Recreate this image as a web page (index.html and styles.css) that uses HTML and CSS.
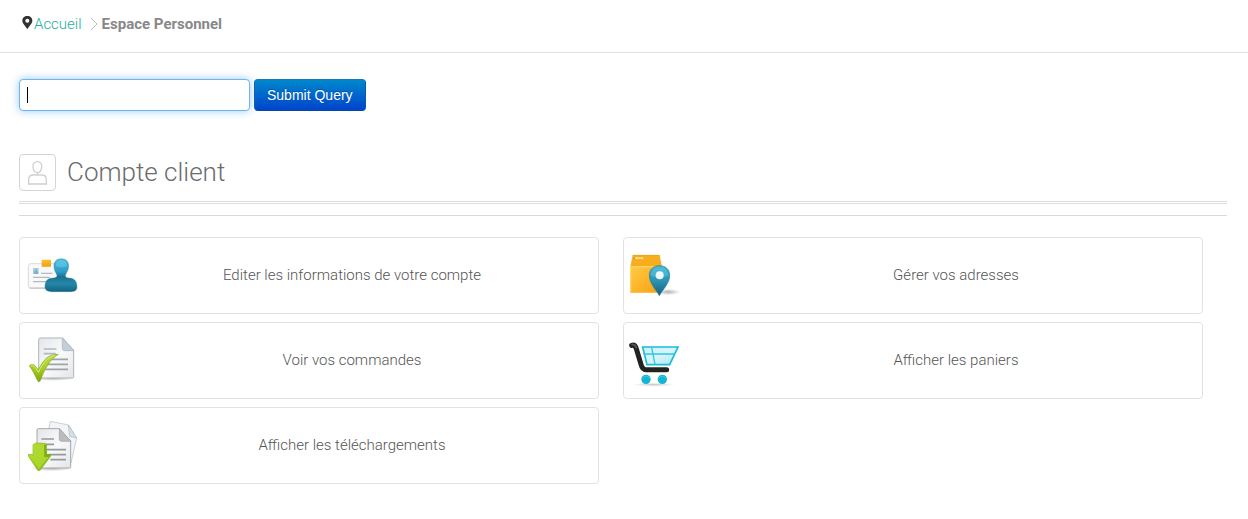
FILE: index.html
```html
<!DOCTYPE html>
<html lang="fr">
  <head>
    <meta charset="UTF-8" />
    <meta name="viewport" content="width=device-width, initial-scale=1.0" />
    <title>Espace Personnel</title>
    <link rel="stylesheet" href="styles.css">
  </head>
  <body>
    <nav class="breadcrumb">
      <svg class="pin" viewBox="0 0 33 45" aria-hidden="true">
        <path fill="#333" fill-rule="evenodd" d="M16 3C7 3 1 9 1 17c0 9 9 15 15 26 6-11 15-17 15-26C31 9 25 3 16 3zm0 8a6 6 0 1 1 0 12 6 6 0 0 1 0-12z" />
      </svg>
      <a href="#">Accueil</a>
      <svg class="chevron" viewBox="0 0 8 14" aria-hidden="true">
        <path d="M1 1l6 6-6 6" fill="none" stroke="#bbb" />
      </svg>
      <span class="current">Espace Personnel</span>
    </nav>

    <main class="content">
      <form class="search">
        <div class="search-field">
          <input class="search-input" type="text" aria-label="Rechercher" autofocus />
        </div>
        <button class="search-btn" type="submit">Submit Query</button>
      </form>

      <header class="title">
        <span class="title-icon">
          <svg viewBox="0 0 57 72" aria-hidden="true">
            <g fill="none" stroke="#d0d0d0" stroke-width="4">
              <path d="M28 2c-9 0-14 7-13 16 1 10 6 17 13 17s12-7 13-17C42 9 37 2 28 2zM28 35v7" />
              <path d="M2 69V56c0-9 5-14 14-14h25c9 0 14 5 14 14v13z" />
            </g>
          </svg>
        </span>
        <h1>Compte client</h1>
      </header>

      <div class="cards">
        <a class="card" href="#">
          <svg class="card-icon" viewBox="27 39 183 183" aria-hidden="true">
            <defs>
              <linearGradient id="user" x1="0" y1="0" x2="0" y2="1">
                <stop offset="0" stop-color="#45b9df" />
                <stop offset=".4" stop-color="#2d9dc4" />
                <stop offset=".55" stop-color="#19718f" />
                <stop offset=".75" stop-color="#2487a9" />
                <stop offset="1" stop-color="#146482" />
              </linearGradient>
              <linearGradient id="orange" x1="0" y1="0" x2="0" y2="1">
                <stop offset="0" stop-color="#fbc132" />
                <stop offset="1" stop-color="#f0a010" />
              </linearGradient>
            </defs>
            <rect x="40" y="95" width="106" height="74" rx="8" fill="#f9f9f9" stroke="#c8c8c8" stroke-width="2" />
            <path d="M44 168h70" stroke="#aaa" stroke-width="2" />
            <rect x="80" y="83" width="28" height="21" rx="1" fill="url(#orange)" />
            <rect x="54" y="108" width="17" height="18" fill="#a5d0e2" />
            <path d="M58 126v-5c0-4 2-5 4-5-3-5 4-7 4-2l-1 3c3 1 4 3 4 5v4z" fill="#79b0c8" />
            <path d="M78 124h34M54 136h50M54 149h42" stroke="#b4b9bc" stroke-width="4" />
            <path d="M139 80c-15 0-23 10-22 24 0 11 6 18 9 26 0 6-4 8-11 8-18 0-25 10-25 27 0 9 8 14 20 14h58c12 0 18-5 18-14 0-17-7-26-24-27-8 0-11-3-11-8 4-9 9-15 10-26 1-14-7-24-22-24z" fill="url(#user)" stroke="#1c7797" />
            <path d="M122 102c0-13 6-18 17-18s17 5 17 18c-9 5-25 5-34 0z" fill="#6ed1ee" opacity=".5" />
          </svg>
          <span class="card-label">Editer les informations de votre compte</span>
        </a>

        <a class="card" href="#">
          <svg class="card-icon" viewBox="26 39 183 183" aria-hidden="true">
            <defs>
              <linearGradient id="box" x1="0" y1="0" x2="1" y2="1">
                <stop offset="0" stop-color="#ffcb45" />
                <stop offset=".5" stop-color="#fdb52a" />
                <stop offset="1" stop-color="#f0a018" />
              </linearGradient>
              <linearGradient id="marker" x1="0" y1="0" x2="0" y2="1">
                <stop offset="0" stop-color="#3db4d3" />
                <stop offset=".5" stop-color="#2c94b4" />
                <stop offset="1" stop-color="#155f80" />
              </linearGradient>
              <radialGradient id="cast">
                <stop offset="0" stop-color="#777" stop-opacity=".6" />
                <stop offset="1" stop-color="#999" stop-opacity="0" />
              </radialGradient>
            </defs>
            <ellipse cx="146" cy="180" rx="38" ry="10" fill="url(#cast)" />
            <path d="M33 104h94v79H33z" fill="url(#box)" />
            <path d="M40 69h81l7 36H33z" fill="#f8ad1d" />
            <path d="M40 70h81" stroke="#e9a01c" stroke-width="2" />
            <path d="M34 104h93" stroke="#ffdc78" stroke-width="3" />
            <path d="M42 76h30v5H42z" fill="#ffdf91" />
            <path d="M42 76h5v5h-5z" fill="#9b9c55" />
            <path d="M34 181h92M35 106v75" stroke="#ffd25f" stroke-width="2" />
            <path d="M121 101c-19 0-31 12-31 29 0 24 18 40 30 61 12-21 31-37 31-61 0-17-12-29-30-29z" fill="url(#marker)" stroke="#207c9a" stroke-width="2" />
            <path d="M94 130c0-15 11-25 26-25s27 10 27 25c-14 9-39 9-53 0z" fill="#71cee2" opacity=".4" />
            <circle cx="121" cy="130" r="12" fill="#eefaff" />
          </svg>
          <span class="card-label">Gérer vos adresses</span>
        </a>

        <a class="card" href="#">
          <svg class="card-icon" viewBox="27 36 183 183" aria-hidden="true">
            <defs>
              <linearGradient id="paper" x1="0" y1="0" x2="1" y2="1">
                <stop offset="0" stop-color="#e3e5e7" />
                <stop offset=".5" stop-color="#fafafa" />
                <stop offset="1" stop-color="#e2e5e8" />
              </linearGradient>
              <linearGradient id="check" x1="0" y1="0" x2="0" y2="1">
                <stop offset="0" stop-color="#bfdb48" />
                <stop offset=".5" stop-color="#a9cf20" />
                <stop offset="1" stop-color="#7ba711" />
              </linearGradient>
            </defs>
            <ellipse cx="115" cy="181" rx="65" ry="8" fill="url(#cast)" />
            <path d="M76 60h67l33 37v79q0 4-4 4H76q-5 0-5-5V65q0-5 5-5z" fill="url(#paper)" stroke="#aeb5bb" stroke-width="3" />
            <path d="M142 60l35 38h-28q-7 0-7-7z" fill="#c4d0d9" stroke="#a4b0b8" stroke-width="2" />
            <path d="M86 93h38M86 107h36" stroke="#b4b8be" stroke-width="5" />
            <path d="M95 124h64M91 139h68M90 154h69" stroke="#a0a4aa" stroke-width="5" />
            <path d="M43 143c6-5 13-4 17 0l10 13c15-31 31-48 60-47-26 16-40 41-54 79-2 5-6 4-8 0-8-17-15-31-25-45z" fill="url(#check)" stroke="#80a61b" stroke-width="2" />
            <path d="M48 143c7-3 11 1 22 20 14-30 28-46 48-51" fill="none" stroke="#dced83" stroke-width="3" />
          </svg>
          <span class="card-label">Voir vos commandes</span>
        </a>

        <a class="card" href="#">
          <svg class="card-icon" viewBox="26 36 183 183" aria-hidden="true">
            <defs>
              <linearGradient id="basket" x1="0" y1="0" x2="1" y2="1">
                <stop offset="0" stop-color="#c8f2fa" />
                <stop offset=".5" stop-color="#d8f4fa" />
                <stop offset="1" stop-color="#a4e6f2" />
              </linearGradient>
            </defs>
            <ellipse cx="103" cy="200" rx="65" ry="6" fill="url(#cast)" opacity=".7" />
            <path d="M70 87h106l-25 53H83z" fill="url(#basket)" stroke="#1abcd9" stroke-width="5" />
            <path d="M73 108h92M97 89l10 50" fill="none" stroke="#35c5dd" stroke-width="4" />
            <path d="M37 82q10-3 14 10l14 47q4 16 15 16h62" fill="none" stroke="#222" stroke-width="15" stroke-linecap="round" />
            <path d="M38 79q10-1 13 10" fill="none" stroke="#555" stroke-width="5" stroke-linecap="round" />
            <circle cx="80" cy="184" r="14" fill="#13b5d3" />
            <circle cx="129" cy="184" r="14" fill="#13b5d3" />
            <path d="M69 181q11-14 22 0M118 181q11-14 22 0" fill="none" stroke="#43c9e0" stroke-width="3" />
          </svg>
          <span class="card-label">Afficher les paniers</span>
        </a>

        <a class="card" href="#">
          <svg class="card-icon" viewBox="27 36 183 183" aria-hidden="true">
            <defs>
              <linearGradient id="arrow" x1="0" y1="0" x2="1" y2="1">
                <stop offset="0" stop-color="#c4df3e" />
                <stop offset=".5" stop-color="#a2d21e" />
                <stop offset="1" stop-color="#78ad0c" />
              </linearGradient>
            </defs>
            <ellipse cx="110" cy="196" rx="65" ry="9" fill="url(#cast)" />
            <path d="M106 55l55 11 24 39-17 75-85-15z" fill="#f2f4f5" stroke="#b4bdc2" stroke-width="2" />
            <path d="M160 66l25 39-21-5z" fill="#d4dfe6" stroke="#adb9c0" stroke-width="2" />
            <path d="M70 77h63l34 37v77q0 4-4 4H70q-4 0-4-4V81q0-4 4-4z" fill="url(#paper)" stroke="#a4a8ab" stroke-width="3" />
            <path d="M133 77l35 38h-29q-6 0-6-7z" fill="#babdc0" stroke="#9b9fa1" stroke-width="2" />
            <path d="M79 108h38M79 124h38M94 140h59M100 155h53M106 170h47" stroke="#969a9d" stroke-width="5" />
            <path d="M54 125l9-5 26 1 5 4 1 29 13 1-2 6-31 41-6 1-28-42-1-7 14 1z" fill="url(#arrow)" stroke="#83b51d" stroke-width="2" />
            <path d="M54 126l33 2 2 34 12-1-29 36-27-41 11 2z" fill="#afd832" opacity=".8" />
            <path d="M87 127l7-3 1 30 13 1-6 6-14 1z" fill="#719f10" opacity=".7" />
          </svg>
          <span class="card-label">Afficher les téléchargements</span>
        </a>
      </div>
    </main>
  </body>
</html>
```

FILE: styles.css
```css
* {
  box-sizing: border-box;
}

body {
  margin: 0;
  background-color: #fff;
  color: #6c6c6c;
  font-family: Roboto, sans-serif;
  font-size: 15px;
  font-weight: 300;
  line-height: 20px;
}

a {
  text-decoration: none;
}

.breadcrumb {
  display: flex;
  align-items: center;
  padding: 14px 22px 18px;
  border-bottom: 1px solid #e0e0e0;
}

.breadcrumb a {
  color: #1fae9e;
}

.pin {
  width: 11px;
  height: 15px;
  margin: 0 1px 4px 0;
}

.chevron {
  width: 8px;
  height: 14px;
  margin: 0 4px 0 8px;
}

.current {
  color: #888;
  font-weight: 700;
}

.content {
  padding: 26px 21px 35px 19px;
}

.search {
  display: flex;
  gap: 4px;
}

.search-field {
  position: relative;
  width: 231px;
}

.search-input {
  display: block;
  width: 100%;
  height: 32px;
  padding: 4px 6px;
  border: 1px solid #ccc;
  border-radius: 4px;
  color: #000;
  caret-color: transparent;
  font-family: "Liberation Sans", Arial, sans-serif;
  font-size: 14px;
}

.search-input:focus {
  border-color: #6fb5ec;
  outline: 0;
  box-shadow: 0 0 8px rgba(82, 168, 236, 0.6);
}

/* steady caret while the empty field has focus */
.search-field:focus-within::after {
  content: "";
  position: absolute;
  top: 8px;
  left: 8px;
  width: 1px;
  height: 16px;
  background-color: #000;
}

.search-btn {
  height: 32px;
  padding: 0 12px;
  border: 1px solid #0467b5;
  border-color: #1677b8 #0758b7 #0849a0;
  border-radius: 4px;
  background: linear-gradient(#0088cc, #0044cc);
  color: #fff;
  font-family: "Liberation Sans", Arial, sans-serif;
  font-size: 14px;
  text-shadow: 0 -1px 0 rgba(0, 0, 0, 0.25);
  cursor: pointer;
}

.title {
  display: flex;
  align-items: center;
  gap: 11px;
  margin-top: 43px;
  padding-bottom: 10px;
  border-bottom: 3px double #ddd;
}

.title-icon {
  display: flex;
  align-items: center;
  justify-content: center;
  width: 37px;
  height: 37px;
  border: 1px solid #d4d4d4;
  border-radius: 4px;
}

.title-icon svg {
  width: 19px;
  height: 24px;
}

h1 {
  margin: 0;
  padding-bottom: 2px;
  font-size: 26px;
  font-weight: 300;
  line-height: 34px;
}

.cards {
  display: grid;
  grid-template-columns: 1fr 1fr;
  gap: 8px 24px;
  margin-top: 11px;
  padding: 21px 24px 0 0;
  border-top: 1px solid #d9d9d9;
}

.card {
  display: flex;
  align-items: center;
  gap: 21px;
  padding: 7px 0 7px 4px;
  border: 1px solid #e2e2e2;
  border-radius: 4px;
  color: #555;
}

.card:hover {
  border-color: #bbb;
}

.card-icon {
  width: 61px;
  height: 61px;
}

.card-label {
  flex: 1;
  padding-bottom: 2px;
  text-align: center;
}
```
